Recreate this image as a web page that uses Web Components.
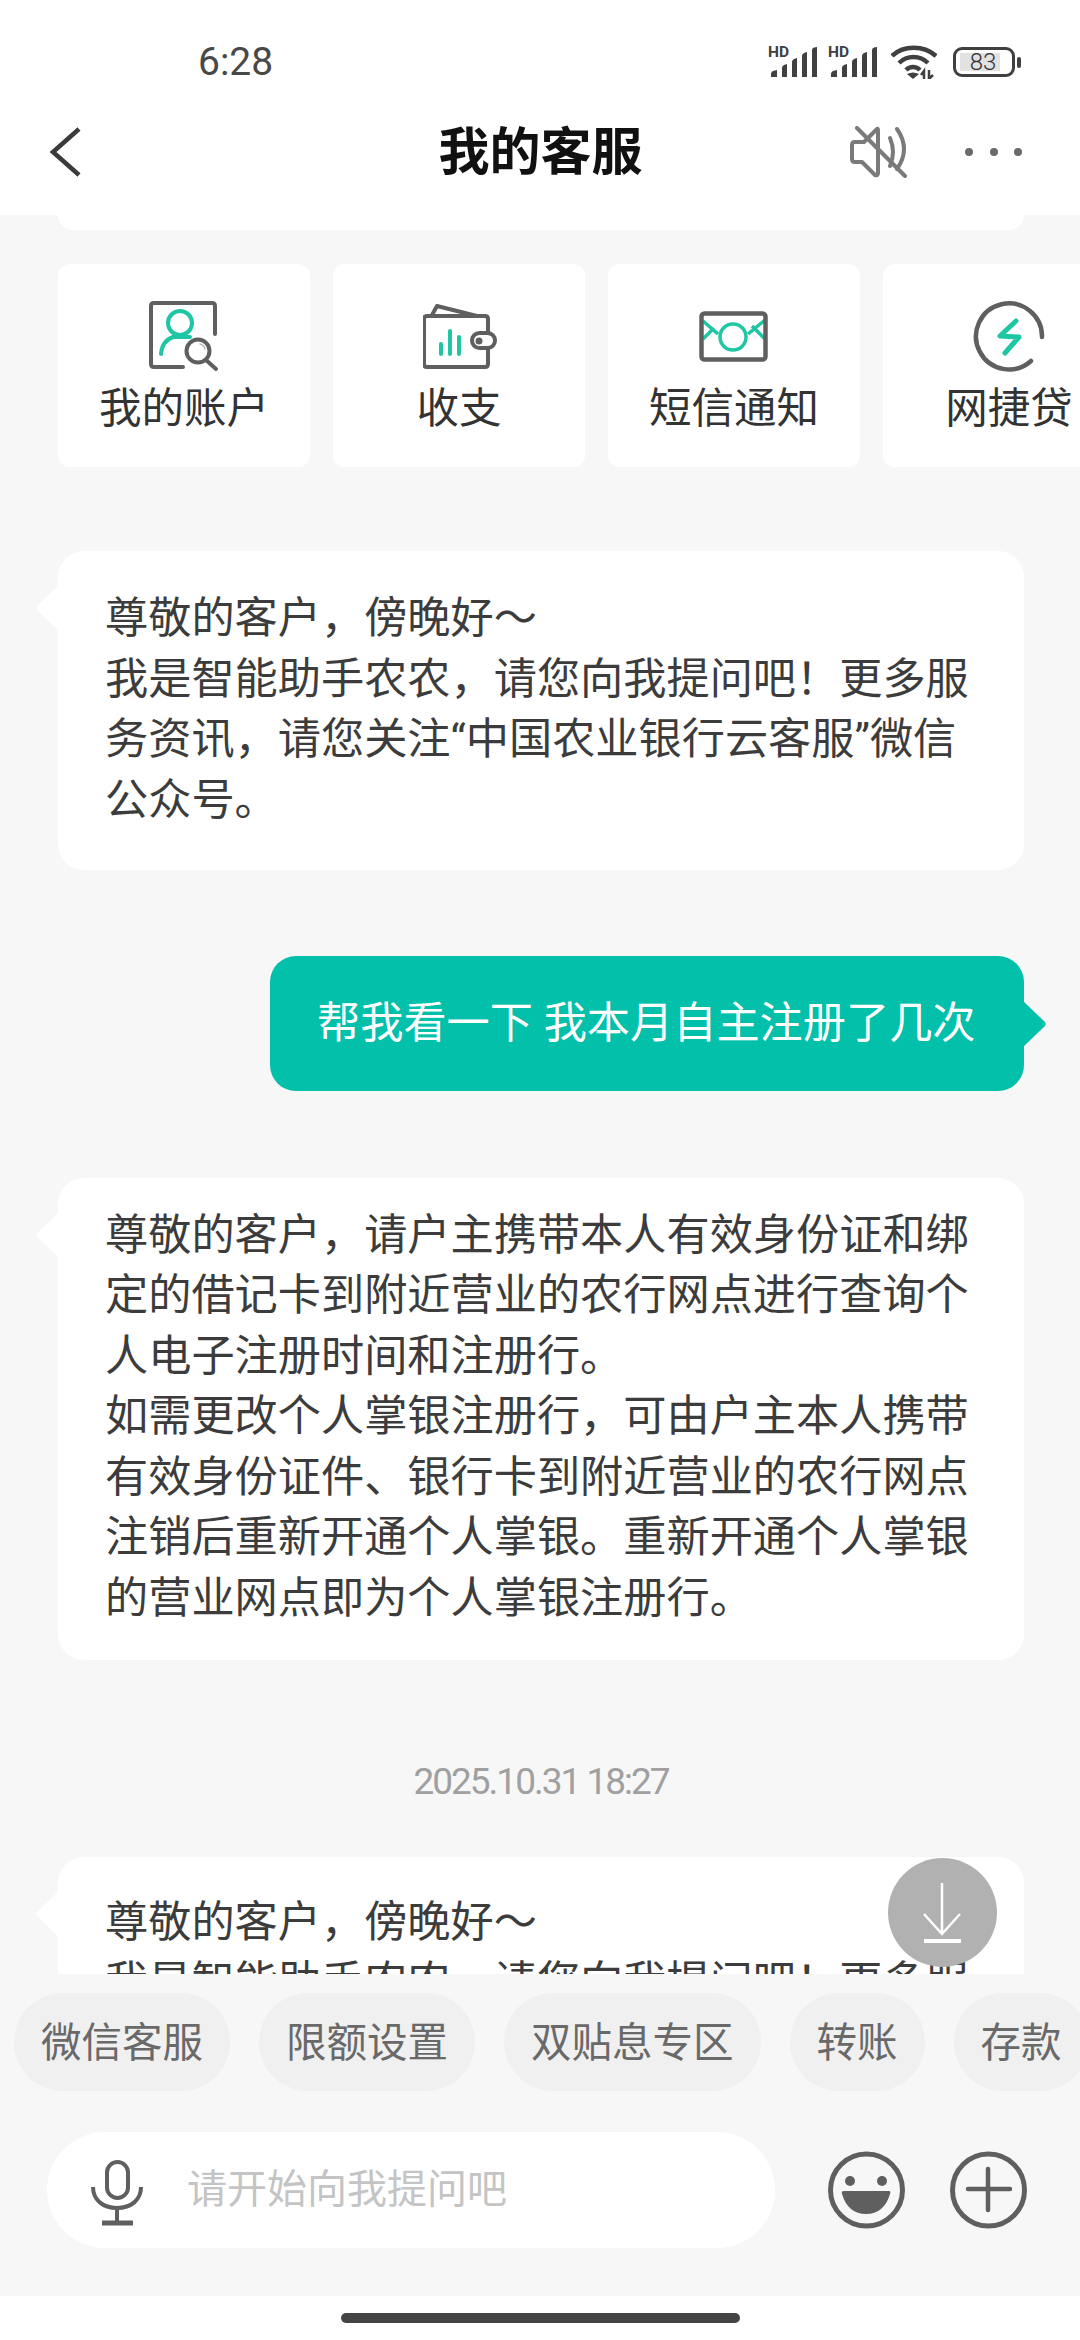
<!DOCTYPE html>
<html>
<head>
<meta charset="utf-8">
<title>我的客服</title>
<style>
  html, body { margin: 0; padding: 0; height: 2340px; overflow: hidden; background: #f7f7f7; }
  body { font-family: Roboto, "Noto Sans CJK SC", sans-serif; }
</style>
</head>
<body>
<chat-app></chat-app>

<script>
const GREY = '#5f5f5f';
const GREEN = '#1fc6a4';

class SignalIcon extends HTMLElement {
   constructor() {
      super();
      this.attachShadow({ mode: 'open' });
   }
   connectedCallback() {
      this.shadowRoot.innerHTML = `
         <style>
            :host { display: block; position: relative; width: 50px; height: 32px; flex: none; }
            span { position: absolute; left: 0; top: 0; font: 700 15.500px/12px Roboto, sans-serif; color: #404040; }
            svg { display: block; }
         </style>
         <svg width="50" height="32" viewBox="0 0 50 32" fill="#404040">
            <path d="M3 31v-3q0-2 2-3l4-1v7zM14 31v-9q0-2 2-3l3-1v13zM24 31v-15q0-2 2-3l3-1v19zM34 31v-21q0-2 2-3l3-1v25zM44 31v-27q0-2 2-2.500l3-.500v30z"/>
         </svg>
         <span>HD</span>
      `;
   }
}

class StatusBar extends HTMLElement {
   constructor() {
      super();
      this.attachShadow({ mode: 'open' });
   }
   connectedCallback() {
      this.shadowRoot.innerHTML = `
         <style>
            :host { display: flex; align-items: center; height: 92px; padding: 32px 59px 0 198px; box-sizing: border-box; }
            .time { font: 400 39px/44px Roboto, sans-serif; color: #484848; }
            .icons { margin-left: auto; display: flex; align-items: center; }
            signal-icon + signal-icon { margin-left: 10px; }
            svg { display: block; margin-left: 13px; flex: none; }
            .batt { position: relative; width: 62px; height: 30px; border: 3px solid #404040; border-radius: 9px; box-sizing: border-box; margin-left: 16px; }
            .fill { position: absolute; left: 4px; top: 3px; bottom: 3px; width: 40px; background: #e2e2e2; }
            .num { position: relative; display: block; text-align: center; font: 300 24px/24px Roboto, sans-serif; color: #333; margin-left: -2px; }
            .nub { width: 4px; height: 11px; background: #404040; border-radius: 2px; margin-left: 2px; }
         </style>
         <span class="time">6:28</span>
         <div class="icons">
            <signal-icon></signal-icon>
            <signal-icon></signal-icon>
            <svg width="46" height="34" viewBox="0 0 46 34" fill="none" stroke="#404040" stroke-width="4.500">
               <path d="M1 11C12 0 33 0 45 11"/>
               <path d="M8 18C16 10 29 10 37 18"/>
               <path d="M15 25C19 21 25 21 29 25"/>
               <path d="M22 34l-6-5q6-3 12 0z" fill="#404040" stroke="none"/>
               <path d="M33 34v-8l-3 4M38 25v9l4-4" stroke-width="2.500"/>
            </svg>
            <div class="batt"><div class="fill"></div><span class="num">83</span></div>
            <div class="nub"></div>
         </div>
      `;
   }
}

class TopBar extends HTMLElement {
   constructor() {
      super();
      this.attachShadow({ mode: 'open' });
   }
   connectedCallback() {
      this.shadowRoot.innerHTML = `
         <style>
            :host { display: flex; align-items: center; height: 123px; padding: 0 58px 3px 48px; position: relative; box-sizing: border-box; }
            .title { position: absolute; left: 1px; right: 0; top: 26px; text-align: center; font-size: 51px; line-height: 70px; font-weight: 700; color: #111; }
            svg { display: block; }
            .right { margin-left: auto; display: flex; align-items: center; gap: 58px; }
            .dots { display: flex; gap: 16.500px; }
            .dots i { width: 8px; height: 8px; background: #6a6a6a; border-radius: 50%; }
         </style>
         <svg width="34" height="50" viewBox="0 0 34 50" fill="none" stroke="#3a3a3a" stroke-width="4.500"><path d="M31 2L5 25L31 48"/></svg>
         <div class="title">我的客服</div>
         <div class="right">
            <svg width="57" height="52" viewBox="0 0 57 52" fill="none" stroke="#7a7a7a" stroke-width="4" stroke-linejoin="round" stroke-linecap="round">
               <path d="M27 3L14 16H5q-3 0-3 3V33q0 3 3 3H12L25 49q3 1 3-2V5q0-3-1-2z"/>
               <path d="M40 12q6 14 0 28M47 3q14 20 0 40"/>
               <path d="M7 2L55 50"/>
            </svg>
            <div class="dots"><i></i><i></i><i></i></div>
         </div>
      `;
   }
}

class ShortcutCard extends HTMLElement {
   constructor() {
      super();
      this.attachShadow({ mode: 'open' });
   }
   connectedCallback() {
      this.shadowRoot.innerHTML = `
         <style>
            :host { flex: 0 0 252px; height: 203px; background: #fff; border-radius: 12px; display: flex; flex-direction: column; align-items: center; box-sizing: border-box; overflow: hidden; }
            .ic { height: 72px; margin-top: 37px; display: flex; align-items: center; justify-content: center; }
            .lb { font-size: 42.500px; line-height: 56px; color: #333; margin-top: 8px; white-space: nowrap; }
         </style>
         <div class="ic"><slot name="icon"></slot></div>
         <div class="lb"><slot></slot></div>
      `;
   }
}

class ChatBubble extends HTMLElement {
   constructor() {
      super();
      this.attachShadow({ mode: 'open' });
   }
   connectedCallback() {
      const out = this.hasAttribute('out');
      const bg = out ? '#02c0a9' : '#fff';
      this.shadowRoot.innerHTML = `
         <style>
            :host { display: block; position: relative; box-sizing: border-box; background: ${bg}; color: ${out ? '#fff' : '#3c3c3c'}; border-radius: 26px; font-size: 43.200px; line-height: 60.500px; padding: var(--pt, 38px) 47px var(--pb, 36px); }
            svg { position: absolute; top: ${out ? '45px' : '34px'}; ${out ? 'right: -23px;' : 'left: -23px;'} display: block; }
         </style>
         <svg width="24" height="46" viewBox="0 0 24 46" fill="${bg}">
            <path d="${out ? 'M0 0L22 21q1 2 0 4L0 46z' : 'M24 0L2 21q-1 2 0 4L24 46z'}"/>
         </svg>
         <slot></slot>
      `;
   }
}

class SuggestChip extends HTMLElement {
   constructor() {
      super();
      this.attachShadow({ mode: 'open' });
   }
   connectedCallback() {
      this.shadowRoot.innerHTML = `
         <style>
            :host { flex: 0 0 auto; height: 98px; padding: 0 27px 6px; box-sizing: border-box; background: #f0f0f0; border-radius: 49px; display: flex; align-items: center; font-size: 40.500px; color: #696969; white-space: nowrap; }
         </style>
         <slot></slot>
      `;
   }
}

class InputBar extends HTMLElement {
   constructor() {
      super();
      this.attachShadow({ mode: 'open' });
   }
   connectedCallback() {
      this.shadowRoot.innerHTML = `
         <style>
            :host { display: flex; align-items: center; padding-left: 47px; height: 116px; }
            .box { flex: none; width: 728px; height: 116px; background: #fff; border-radius: 58px; display: flex; align-items: center; padding-left: 44px; box-sizing: border-box; gap: 44px; }
            .ph { font-size: 40px; color: #c4c4c4; padding-bottom: 8px; }
            .mic { margin-top: 6px; }
            .face { margin-left: 53px; }
            .plus { margin-left: 44px; }
            svg { display: block; flex: none; }
         </style>
         <div class="box">
            <svg class="mic" width="52" height="66" viewBox="0 0 52 66" fill="none" stroke="${GREY}" stroke-width="4">
               <rect x="16" y="2" width="21" height="36" rx="10.500"/>
               <path d="M2 27c0 13 10 21 24 21s24-8 24-21M26 48v14"/>
               <path d="M11 63h31" stroke-width="5"/>
            </svg>
            <span class="ph">请开始向我提问吧</span>
         </div>
         <svg class="face" width="78" height="78" viewBox="0 0 78 78">
            <circle cx="38.500" cy="39" r="36" fill="none" stroke="${GREY}" stroke-width="5"/>
            <circle cx="22" cy="30" r="5" fill="${GREY}"/>
            <circle cx="54" cy="30" r="5" fill="${GREY}"/>
            <path d="M16 40h45q2 0 1 3q-6 20-24 20q-18 0-24-20q-1-3 2-3z" fill="${GREY}"/>
         </svg>
         <svg class="plus" width="78" height="78" viewBox="0 0 78 78" fill="none" stroke="${GREY}">
            <circle cx="38.500" cy="39" r="36" stroke-width="5"/>
            <path d="M18 38h42M38 18v41" stroke-width="4.500" stroke-linecap="round"/>
         </svg>
      `;
   }
}

class ChatApp extends HTMLElement {
   constructor() {
      super();
      this.attachShadow({ mode: 'open' });
   }
   connectedCallback() {
      this.shadowRoot.innerHTML = `
         <style>
            :host { display: flex; flex-direction: column; width: 1080px; height: 2340px; background: #f7f7f7; overflow: hidden; }
            .head { background: #fff; height: 215px; flex: none; }
            .msgs { height: 1759px; flex: none; overflow: hidden; position: relative; padding: 0 56px 0 58px; box-sizing: border-box; }
            .stub { height: 15px; background: #fff; border-radius: 0 0 20px 20px; }
            .row { display: flex; gap: 23px; margin-top: 34px; width: 1200px; }
            .in1 { margin-top: 84px; --pt: 38px; --pb: 39px; }
            .out { margin: 86px 0 0 212px; --pt: 38px; --pb: 36px; }
            .in2 { margin-top: 87px; --pt: 28px; --pb: 30.500px; }
            .time { margin-top: 95px; text-align: center; font: 37px/54px Roboto, sans-serif; letter-spacing: -2px; color: #a0a0a0; }
            .in3 { margin-top: 48px; --pt: 36px; }
            .down { position: absolute; left: 888px; top: 1643px; width: 109px; height: 109px; border-radius: 50%; background: #b1b1b1; }
            .chips { display: flex; gap: 29px; margin: 19px 0 0 14px; flex: none; width: 1200px; }
            input-bar { margin-top: 41px; }
            .nav { margin-top: auto; height: 44px; background: #fff; display: flex; justify-content: center; padding-top: 17px; box-sizing: border-box; flex: none; }
            .nav i { width: 399px; height: 10px; background: #444; border-radius: 5px; }
            svg { display: block; }
            .wallet { margin-left: 2px; }
         </style>
         <div class="head">
            <status-bar></status-bar>
            <top-bar></top-bar>
         </div>
         <div class="msgs">
            <div class="stub"></div>
            <div class="row">
               <shortcut-card>
                  <svg slot="icon" width="70" height="72" viewBox="0 0 70 72" fill="none" stroke="${GREY}" stroke-width="4" stroke-linecap="round">
                     <path d="M34 66H5q-3 0-3-3V5q0-3 3-3H63q3 0 3 3V33"/>
                     <circle cx="31" cy="22" r="12" stroke="${GREEN}"/>
                     <path d="M12 53q1-13 12-17h17" stroke="${GREEN}"/>
                     <circle cx="49" cy="50" r="11.500"/>
                     <path d="M57 59l10 9"/>
                     <path d="M51 43q4 1 5 5" stroke="#b5b5b5" stroke-width="1.500"/>
                  </svg>
                  我的账户
               </shortcut-card>
               <shortcut-card>
                  <svg class="wallet" slot="icon" width="74" height="66" viewBox="0 0 74 66" fill="none" stroke="${GREY}" stroke-width="4" stroke-linecap="round" stroke-linejoin="round">
                     <path d="M9 11L14 2L54 12"/>
                     <path d="M65 29V15q0-3-3-3H4q-3 0-3 3V60q0 3 3 3H62q3 0 3-3V44"/>
                     <rect x="49" y="29" width="23" height="15" rx="7.500"/>
                     <circle cx="56" cy="37" r="1.500" fill="${GREY}"/>
                     <path d="M18 50V40M27 50V27M36 50V33" stroke="${GREEN}"/>
                  </svg>
                  收支
               </shortcut-card>
               <shortcut-card>
                  <svg slot="icon" width="70" height="52" viewBox="0 0 70 52" fill="none" stroke-width="3.500">
                     <path d="M4 10L19 23M4 28L15 17M66 9L49 23M66 28L53 15" stroke="${GREEN}"/>
                     <circle cx="34" cy="26" r="13" stroke="${GREEN}"/>
                     <rect x="2.500" y="2.500" width="64" height="46" rx="3" stroke="${GREY}" stroke-width="4.500"/>
                  </svg>
                  短信通知
               </shortcut-card>
               <shortcut-card>
                  <svg slot="icon" width="72" height="72" viewBox="0 0 72 72" fill="none" stroke-width="4.500" stroke-linecap="round" stroke-linejoin="round">
                     <path d="M69 36A33 33 0 1 0 58 60" stroke="${GREY}"/>
                     <path d="M43 20L27 35L46 36L32 52" stroke="${GREEN}" stroke-width="5"/>
                  </svg>
                  网捷贷
               </shortcut-card>
            </div>
            <chat-bubble class="in1">尊敬的客户，傍晚好～<br>我是智能助手农农，请您向我提问吧！更多服务资讯，请您关注“中国农业银行云客服”微信公众号。</chat-bubble>
            <chat-bubble class="out" out>帮我看一下 我本月自主注册了几次</chat-bubble>
            <chat-bubble class="in2">尊敬的客户，请户主携带本人有效身份证和绑定的借记卡到附近营业的农行网点进行查询个人电子注册时间和注册行。<br>如需更改个人掌银注册行，可由户主本人携带有效身份证件、银行卡到附近营业的农行网点注销后重新开通个人掌银。重新开通个人掌银的营业网点即为个人掌银注册行。</chat-bubble>
            <div class="time">2025.10.31 18:27</div>
            <chat-bubble class="in3">尊敬的客户，傍晚好～<br>我是智能助手农农，请您向我提问吧！更多服</chat-bubble>
            <div class="down">
               <svg width="109" height="109" viewBox="0 0 109 109" fill="none" stroke="#fff">
                  <path d="M54 25V74M36 56L54 76L72 56" stroke-width="2.500"/>
                  <path d="M36 83H73" stroke-width="4"/>
               </svg>
            </div>
         </div>
         <div class="chips">
            <suggest-chip>微信客服</suggest-chip>
            <suggest-chip>限额设置</suggest-chip>
            <suggest-chip>双贴息专区</suggest-chip>
            <suggest-chip>转账</suggest-chip>
            <suggest-chip>存款</suggest-chip>
         </div>
         <input-bar></input-bar>
         <div class="nav"><i></i></div>
      `;
   }
}

customElements.define('signal-icon', SignalIcon);
customElements.define('status-bar', StatusBar);
customElements.define('top-bar', TopBar);
customElements.define('shortcut-card', ShortcutCard);
customElements.define('chat-bubble', ChatBubble);
customElements.define('suggest-chip', SuggestChip);
customElements.define('input-bar', InputBar);
customElements.define('chat-app', ChatApp);
</script>
</body>
</html>
